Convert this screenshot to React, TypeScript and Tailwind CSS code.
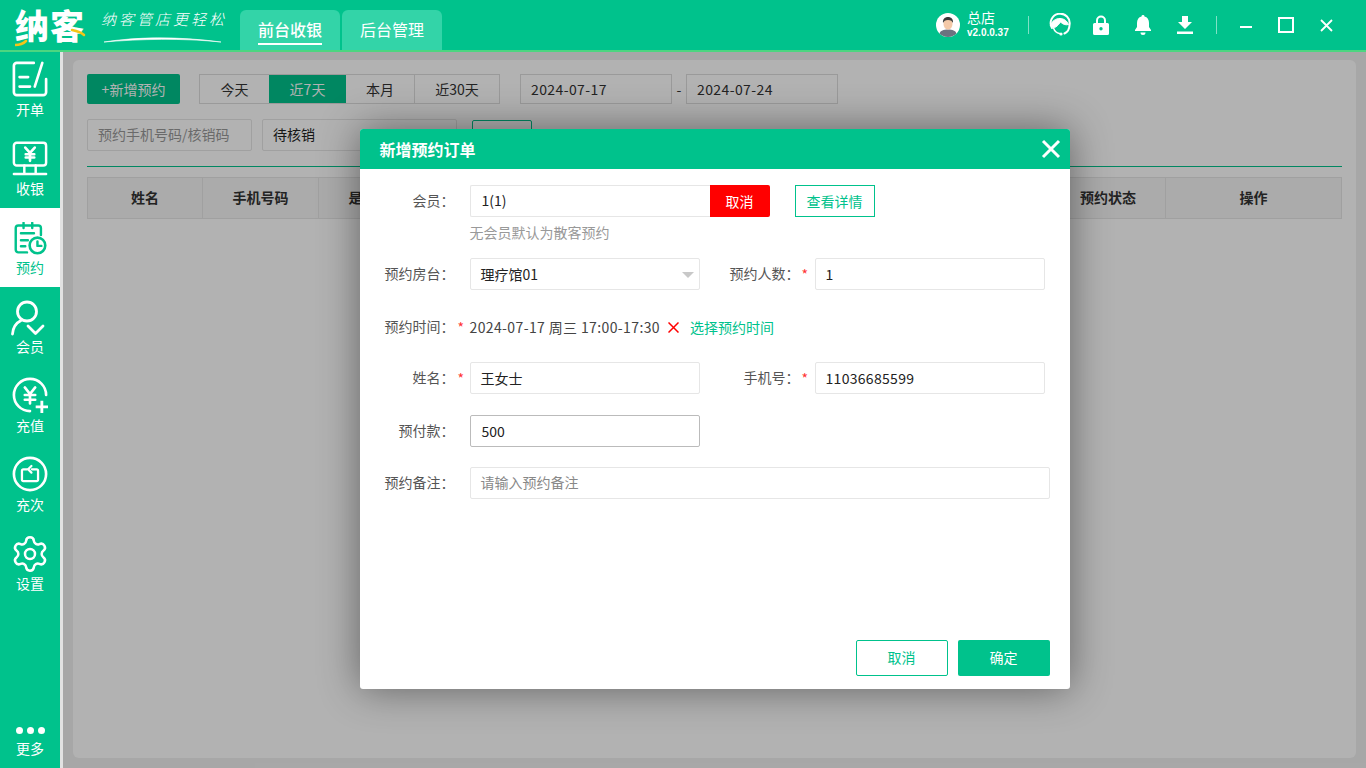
import { Settings } from "lucide-react";

const menus = [
  { label: "开单", key: "order" },
  { label: "收银", key: "cash" },
  { label: "预约", key: "book", active: true },
  { label: "会员", key: "member" },
  { label: "充值", key: "recharge" },
  { label: "充次", key: "times" },
  { label: "设置", key: "settings" },
];

const MenuIcon = ({ name }: { name: string }) => {
  if (name === "order")
    return (
      <svg width="36" height="36" viewBox="0 0 38 38" fill="none" stroke="#fff" strokeWidth="2.8" strokeLinecap="round" strokeLinejoin="round">
        <path d="M23 2H5a3 3 0 0 0-3 3v28a3 3 0 0 0 3 3h28a3 3 0 0 0 3-3V19" />
        <path d="M8 17h9M8 27h11M32 2l-8 25" />
      </svg>
    );
  if (name === "cash")
    return (
      <svg width="36" height="36" viewBox="0 0 38 38" fill="none" stroke="#fff" strokeWidth="2.6" strokeLinecap="round" strokeLinejoin="round">
        <rect x="2" y="3" width="34" height="24" rx="3" />
        <path d="M13 27v9M25 27v9M2 36h34" />
        <path d="M14 8l5 5.500 5-5.500M19 13.500V22M14.500 15h9M14.500 18.500h9" strokeWidth="2.8" />
      </svg>
    );
  if (name === "book")
    return (
      <svg className="mt-[3px]" width="33" height="33" viewBox="0 0 38 38" fill="none" stroke="#00c28c" strokeWidth="2.8" strokeLinecap="round" strokeLinejoin="round">
        <path d="M15 35H5a3 3 0 0 1-3-3V7a3 3 0 0 1 3-3h23a3 3 0 0 1 3 3v8" />
        <path d="M11 1v6M21 1v6M8 13h15M8 21h8M8 28h5" />
        <circle cx="27" cy="27" r="9" strokeWidth="3" />
        <path d="M27 22.500V27.500h4.500" />
      </svg>
    );
  if (name === "member")
    return (
      <svg width="38" height="38" viewBox="0 0 38 38" fill="none" stroke="#fff" strokeWidth="2.8" strokeLinecap="round" strokeLinejoin="round">
        <circle cx="16" cy="13.500" r="9.500" />
        <path d="M1.500 36C2 29 5 25 10 22.500M17 28l7.500 7.500L32 28" />
      </svg>
    );
  if (name === "recharge")
    return (
      <svg width="36" height="36" viewBox="0 0 38 38" fill="none" stroke="#fff" strokeWidth="2.8" strokeLinecap="round" strokeLinejoin="round">
        <path d="M36 19A17 17 0 1 0 19 36" />
        <path d="M13.500 11l5.500 7 5.500-7M19 18v10M13.500 19h11M13.500 24h11" />
        <path d="M31.500 25v13M25 31.500h13" strokeWidth="3" strokeLinecap="butt" />
      </svg>
    );
  if (name === "times")
    return (
      <svg width="36" height="36" viewBox="0 0 38 38" fill="none" stroke="#fff" strokeWidth="2.8" strokeLinecap="round" strokeLinejoin="round">
        <circle cx="19" cy="19" r="17" />
        <path d="M21 14h5a1.500 1.500 0 0 1 1.500 1.500V25a1.500 1.500 0 0 1-1.500 1.500H12a1.500 1.500 0 0 1-1.500-1.500v-9.500A1.500 1.500 0 0 1 12 14h4" strokeWidth="2.4" />
        <path d="M20.500 10.500L17 14l3.500 3.500" strokeWidth="2.4" />
      </svg>
    );
  return <Settings size={40} color="#fff" strokeWidth={1.5} className="-mt-[1px]" />;
};

const Label = ({ text, required }: { text: string; required?: boolean }) => (
  <div className="w-[110px] shrink-0 flex justify-end items-center pb-px text-[14px] text-[#555]">
    <span>{text}：</span>
    <span className={`w-[15px] pl-[3px] pt-[2px] text-[#f33] ${required ? "" : "invisible"}`}>*</span>
  </div>
);

const Field = ({ value, className }: { value: string; className: string }) => (
  <div className={`h-[32px] flex items-center px-[10px] border border-[#e6e6e6] rounded-[2px] text-[14px] text-[#222] ${className}`}>{value}</div>
);

// 弹窗挡住的列不写文字
const columns = ["姓名", "手机号码", "是否到店", "", "", "", "", "", "预约状态", "操作"];

const App = () => {
  return (
    <div className="w-[1366px] h-[768px] overflow-hidden flex flex-col bg-[#e2e2e2] font-['Noto_Sans_CJK_SC',sans-serif]">
      <header className="h-[52px] shrink-0 flex bg-[#00c28c] border-b-2 border-[#4cd680]">
        <div className="w-[240px] shrink-0 flex items-center pl-[15px]">
          <div className="relative w-[72px] h-[40px] flex items-center">
            <span className="text-[34px] leading-[40px] font-black text-white tracking-[1px] whitespace-nowrap">纳客</span>
            <svg className="absolute left-0 top-0" width="72" height="42" viewBox="0 0 72 42" fill="none">
              <path d="M0 40c4 0 8-1 11-4" stroke="#f5c518" strokeWidth="2.500" strokeLinecap="round" />
              <path d="M57 25c5 1 9 2 12 5" stroke="#f5c518" strokeWidth="2.500" strokeLinecap="round" />
            </svg>
          </div>
          <div className="relative ml-[14px] w-[126px] h-[40px]">
            <span className="absolute left-0 top-[3px] text-[15px] leading-[22px] font-light italic text-white tracking-[3px] whitespace-nowrap">纳客管店更轻松</span>
            <svg className="absolute left-0 top-[30px]" width="126" height="10" viewBox="0 0 126 10" fill="none">
              <path d="M3 7C35 2 75 1 120 7C80 3 40 4 3 7z" fill="#fff" stroke="#fff" strokeWidth="0.6" />
            </svg>
          </div>
        </div>
        <nav className="flex items-end gap-[2px]">
          <div className="w-[100px] h-[40px] bg-[#33d4a8] rounded-t-[6px] flex justify-center pt-[6px]">
            <span className="h-[29px] text-[16px] leading-[27px] font-medium text-white border-b-2 border-white">前台收银</span>
          </div>
          <div className="w-[100px] h-[40px] bg-[#33d4a8] rounded-t-[6px] flex justify-center pt-[6px]">
            <span className="text-[16px] leading-[27px] text-white">后台管理</span>
          </div>
        </nav>
        <div className="flex-1 flex items-center justify-end pr-[33px] text-white">
          <svg width="24" height="24" viewBox="0 0 24 24">
            <circle cx="12" cy="12" r="12" fill="#fff" />
            <path d="M3.500 20.500c1-3 4-4 8.500-4s7.500 1 8.500 4A12 12 0 0 1 12 24a12 12 0 0 1-8.500-3.500z" fill="#6b7280" />
            <ellipse cx="12" cy="11" rx="4.500" ry="5.500" fill="#f4c9a8" />
            <path d="M7 10c-.5-4 2-6 5-6s5.500 2 5 6c-1-2-2-3-5-3s-4 1-5 3z" fill="#3a3a3a" />
          </svg>
          <div className="ml-[7px] w-[61px] flex flex-col">
            <span className="text-[14px] leading-[16px]">总店</span>
            <span className="text-[10px] leading-[16px] font-bold font-['Liberation_Sans',sans-serif]">v2.0.0.37</span>
          </div>
          <div className="w-px h-[18px] bg-white/50" />
          <div className="w-[61px] flex justify-center">
            <svg width="24" height="24" viewBox="0 0 24 24" fill="none" stroke="#fff" strokeLinecap="round">
              <path d="M4 15A9.500 9.500 0 1 1 21.500 12c0 4-2 7-5 8.500" strokeWidth="2" />
              <path d="M2.500 12.500C4 7.500 8 5.500 12 5.500c4 0 7 2.500 8.500 6-3 1-6-.5-8-2.500-2 3-5 6-7 5.500-1-.2-2.300-1-3-2z" fill="#fff" strokeWidth="1" />
              <path d="M5.500 15c1 3 3 5 6 5.500" strokeWidth="1.500" />
              <circle cx="13" cy="21" r="1.600" fill="#fff" stroke="none" />
            </svg>
          </div>
          <svg className="ml-[3px]" width="16" height="20" viewBox="0 0 16 20">
            <path fillRule="evenodd" fill="#fff" d="M3 8V5.500a5 5 0 0 1 10 0V8h1.500A1.500 1.500 0 0 1 16 9.500v9a1.500 1.500 0 0 1-1.500 1.500h-13A1.500 1.500 0 0 1 0 18.500v-9A1.500 1.500 0 0 1 1.500 8zM5 8h6V5.500a3 3 0 0 0-6 0zM8 12a1.700 1.700 0 1 0 0 3.400A1.700 1.700 0 0 0 8 12z" />
          </svg>
          <svg className="ml-[26px]" width="16" height="20" viewBox="0 0 16 20">
            <path fill="#fff" d="M8 0a1.500 1.500 0 0 1 1.500 1.600C12.500 2.300 14 5 14 8v4l2 3v1H0v-1l2-3V8c0-3 1.500-5.700 4.500-6.400A1.500 1.500 0 0 1 8 0zM5.500 17.500h5a2.500 2.500 0 0 1-5 0z" />
          </svg>
          <svg className="ml-[26px]" width="16" height="18" viewBox="0 0 16 18">
            <path fill="#fff" d="M5 0h6v6h4l-7 7-7-7h4zM0 15.500h16V18H0z" />
          </svg>
          <div className="ml-[23px] w-px h-[18px] bg-white/50" />
          <div className="ml-[23px] w-[12px] h-[2px] bg-white mt-[4px]" />
          <div className="ml-[26px] w-[16px] h-[16px] border-2 border-white" />
          <svg className="ml-[26px]" width="13" height="13" viewBox="0 0 13 13" stroke="#fff" strokeWidth="1.800">
            <path d="M1 1l11 11M12 1L1 12" />
          </svg>
        </div>
      </header>

      <div className="flex-1 flex min-h-0">
        <aside className="w-[60px] shrink-0 flex flex-col bg-[#00c28c] text-white">
          {menus.map((m, i) => (
            <div
              key={m.key}
              className={`${i === 0 ? "h-[77px] pt-[9px]" : "h-[79px] pt-[11px]"} flex flex-col items-center ${m.active ? "bg-white text-[#00c28c]" : ""}`}
            >
              <div className="h-[38px] flex justify-center items-start">
                <MenuIcon name={m.key} />
              </div>
              <span className="text-[14px] leading-[20px]">{m.label}</span>
            </div>
          ))}
          <div className="mt-auto pb-[10px] flex flex-col items-center">
            <div className="flex gap-[4px]">
              <span className="w-[7px] h-[7px] rounded-full bg-white" />
              <span className="w-[7px] h-[7px] rounded-full bg-white" />
              <span className="w-[7px] h-[7px] rounded-full bg-white" />
            </div>
            <span className="mt-[4px] text-[14px] leading-[20px]">更多</span>
          </div>
        </aside>

        <main className="relative flex-1 min-w-0 ml-[3px] bg-[#f0f0f0] pl-[10px] pr-[10px] pt-[8px] pb-[10px]">
          <div className="h-full bg-white rounded-[6px] px-[14px] pt-[14px] text-[14px] text-[#333]">
            <div className="flex items-center h-[30px]">
              <div className="w-[93px] h-[30px] bg-[#00c28c] text-white rounded-[2px] flex items-center justify-center text-[14px]">+新增预约</div>
              <div className="ml-[19px] flex h-[30px] border border-[#ddd]">
                <div className="w-[69px] flex items-center justify-center">今天</div>
                <div className="w-[77px] flex items-center justify-center bg-[#00c28c] text-white">近7天</div>
                <div className="w-[69px] flex items-center justify-center border-r border-[#ddd]">本月</div>
                <div className="w-[84px] flex items-center justify-center">近30天</div>
              </div>
              <div className="ml-[20px] w-[152px] h-[30px] border border-[#ddd] flex items-center px-[10px] tracking-[0.4px]">2024-07-17</div>
              <span className="w-[14px] text-center">-</span>
              <div className="w-[152px] h-[30px] border border-[#ddd] flex items-center px-[10px] tracking-[0.4px]">2024-07-24</div>
            </div>
            <div className="mt-[15px] flex h-[32px]">
              <div className="w-[165px] border border-[#e6e6e6] rounded-[2px] flex items-center pb-px px-[10px] text-[#999]">预约手机号码/核销码</div>
              <div className="ml-[10px] w-[195px] border border-[#e6e6e6] rounded-[2px] flex items-center pb-px px-[10px] text-[#222]">待核销</div>
              <div className="ml-[15px] w-[60px] mt-px border border-[#00c28c] rounded-[2px]" />
            </div>
            <div className="mt-[15px] h-px bg-[#00c28c]" />
            <div className="mt-[10px] h-[42px] grid grid-cols-[115px_116px_116px_116px_116px_116px_116px_152px_115px_1fr] bg-[#f5f5f5] border border-[#e6e6e6]">
              {columns.map((c, i) => (
                <div key={i} className="flex items-center justify-center pb-px border-r border-[#e6e6e6] last:border-r-0 text-[14px] font-bold">{c}</div>
              ))}
            </div>
          </div>

          <div className="absolute inset-0 bg-black/30 flex items-center justify-center pb-[2px]">
            <div className="w-[710px] h-[560px] bg-white rounded-[3px] flex flex-col overflow-hidden shadow-[0_0_40px_rgba(0,0,0,0.45)]">
              <div className="h-[40px] shrink-0 bg-[#00c28c] flex items-center justify-between pl-[20px] pr-[9px]">
                <span className="text-[16px] font-bold text-white">新增预约订单</span>
                <svg width="20" height="20" viewBox="0 0 20 20" stroke="#fff" strokeWidth="3">
                  <path d="M2 2l16 16M18 2L2 18" />
                </svg>
              </div>

              <div className="flex-1 flex flex-col pt-[16px]">
                <div className="flex h-[32px]">
                  <Label text="会员" />
                  <div className="w-[240px] h-[32px] flex items-center pl-[11px] pb-px border border-[#e6e6e6] border-r-0 rounded-l-[2px] text-[14px] text-[#222]">1(1)</div>
                  <div className="w-[60px] h-[32px] bg-[#ff0000] text-white text-[14px] rounded-r-[2px] flex items-center justify-center">取消</div>
                  <div className="ml-[25px] w-[80px] h-[32px] border border-[#00c28c] text-[#00c28c] text-[14px] flex items-center justify-center">查看详情</div>
                </div>
                <div className="ml-[110px] mt-[5px] h-[20px] leading-[20px] text-[14px] text-[#999]">无会员默认为散客预约</div>

                <div className="mt-[16px] flex h-[32px]">
                  <Label text="预约房台" />
                  <div className="relative w-[230px]">
                    <Field value="理疗馆01" className="w-full" />
                    <span className="absolute right-[6px] top-[14px] w-0 h-0 border-x-[6px] border-x-transparent border-t-[6px] border-t-[#c8c8c8]" />
                  </div>
                  <div className="w-[115px] flex justify-end items-center pb-px text-[14px] text-[#555]">
                    <span>预约人数：</span>
                    <span className="w-[15px] pl-[2px] pt-[2px] text-[#f33]">*</span>
                  </div>
                  <Field value="1" className="w-[230px]" />
                </div>

                <div className="mt-[21px] flex h-[32px] items-center">
                  <Label text="预约时间" required />
                  <span className="text-[14px] text-[#444] whitespace-nowrap tracking-[0.38px]">2024-07-17 周三 17:00-17:30</span>
                  <svg className="ml-[8px]" width="11" height="11" viewBox="0 0 11 11" stroke="#f00" strokeWidth="1.500">
                    <path d="M.5.5l10 10M10.500.5l-10 10" />
                  </svg>
                  <span className="ml-[11px] text-[14px] text-[#00c28c]">选择预约时间</span>
                </div>

                <div className="mt-[19px] flex h-[32px]">
                  <Label text="姓名" required />
                  <Field value="王女士" className="w-[230px]" />
                  <div className="w-[115px] flex justify-end items-center pb-px text-[14px] text-[#555]">
                    <span>手机号：</span>
                    <span className="w-[15px] pl-[2px] pt-[2px] text-[#f33]">*</span>
                  </div>
                  <Field value="11036685599" className="w-[230px] tracking-[0.3px]" />
                </div>

                <div className="mt-[21px] flex h-[32px]">
                  <Label text="预付款" />
                  <div className="w-[230px] h-[32px] flex items-center pl-[11px] border border-[#bbb] rounded-[2px] text-[14px] text-[#222]">500</div>
                </div>

                <div className="mt-[20px] flex h-[32px]">
                  <Label text="预约备注" />
                  <div className="w-[580px] h-[32px] flex items-center pb-px px-[10px] border border-[#e6e6e6] rounded-[2px] text-[14px] text-[#888]">请输入预约备注</div>
                </div>

                <div className="mt-auto pb-[13px] pr-[20px] flex justify-end gap-[10px]">
                  <div className="w-[92px] h-[36px] border border-[#00c28c] rounded-[2px] text-[#00c28c] text-[14px] flex items-center justify-center pb-px">取消</div>
                  <div className="w-[92px] h-[36px] bg-[#00c28c] rounded-[2px] text-white text-[14px] flex items-center justify-center pb-px">确定</div>
                </div>
              </div>
            </div>
          </div>
        </main>
      </div>
    </div>
  );
};

export default App;
